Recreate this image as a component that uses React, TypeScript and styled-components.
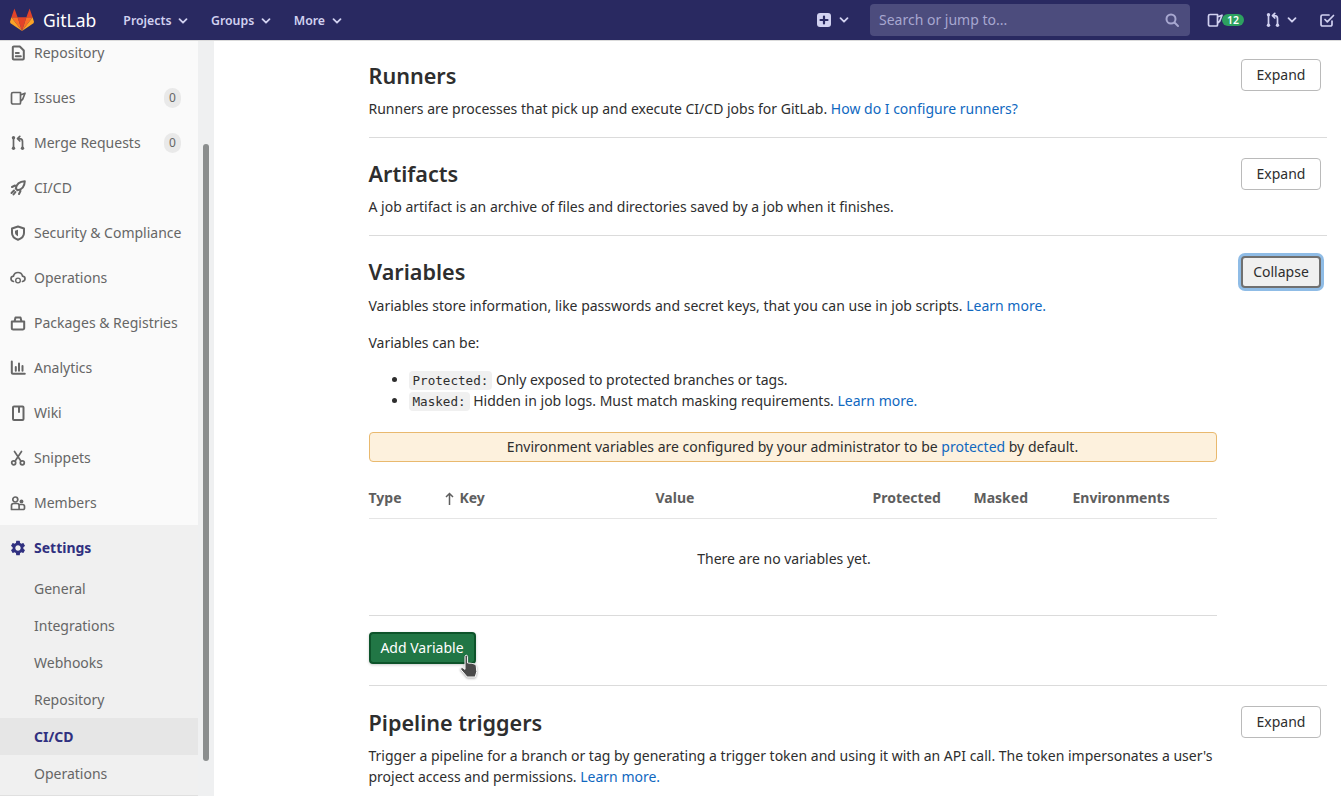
import React from 'react';
import styled, { createGlobalStyle } from 'styled-components';
import { MdSettings } from 'react-icons/md';

const GlobalStyle = createGlobalStyle`
	html, body {
		margin: 0;
		height: 100%;
		overflow: hidden;
	}
	body {
		font-family: 'Noto Sans', 'Liberation Sans', sans-serif;
		font-size: 14px;
		line-height: 20px;
		color: #2e2e2e;
		background: #fff;
	}
`;

const Page = styled.div`
	display: flex;
	flex-direction: column;
	height: 796px;
	overflow: hidden;
`;

const Navbar = styled.header`
	display: flex;
	align-items: center;
	flex: none;
	height: 40px;
	padding-left: 10px;
	background: #292961;
	border-bottom: 1px solid #dbdbdb;
	color: #d1d1f0;
`;

const Brand = styled.div`
	display: flex;
	align-items: center;
	gap: 9px;
	margin-right: 27px;
	color: #fff;
	font-size: 17.5px;
	font-weight: 400;
`;

const NavLink = styled.div`
	display: flex;
	align-items: center;
	gap: 7px;
	margin-right: 22.5px;
	padding-top: 1px;
	font-size: 12.3px;
	font-weight: 600;
`;

const NavRight = styled.div`
	display: flex;
	align-items: center;
	margin-left: auto;
`;

const IconGroup = styled.div<{ $gap?: number; $mr?: number }>`
	display: flex;
	align-items: center;
	gap: ${(p) => p.$gap ?? 7}px;
	margin-right: ${(p) => p.$mr ?? 0}px;
`;

const Search = styled.div`
	display: flex;
	align-items: center;
	justify-content: space-between;
	box-sizing: border-box;
	width: 320px;
	height: 32px;
	margin-right: 17px;
	padding: 0 10px 0 9px;
	border-radius: 4px;
	background: #4c4c7d;
	color: #a7a7d0;
	font-size: 14px;
`;

const NavBadge = styled.span`
	display: inline-block;
	margin-left: -1px;
	width: 22px;
	height: 12px;
	border-radius: 6px;
	background: #2da160;
	color: #fff;
	font-size: 10.5px;
	font-weight: 600;
	line-height: 12px;
	text-align: center;
`;

const Body = styled.div`
	display: flex;
	flex: 1;
	min-height: 0;
`;

const Sidebar = styled.aside`
	display: flex;
	flex: none;
	width: 214px;
	background: #eff0f1;
	overflow: hidden;
`;

const NavList = styled.nav`
	flex: none;
	width: 198px;
	margin-top: -11px;
	background: #fafafa;
`;

const NavItem = styled.div<{ $active?: boolean }>`
	display: flex;
	align-items: center;
	gap: 8px;
	box-sizing: border-box;
	height: 45px;
	padding: 0 17px 0 10px;
	color: ${(p) => (p.$active ? '#303080' : '#666')};
	font-weight: ${(p) => (p.$active ? 700 : 400)};
	background: ${(p) => (p.$active ? '#f0f0f0' : 'transparent')};
`;

const NavLabel = styled.span`
	flex: 1;
	white-space: nowrap;
`;

const Count = styled.span`
	width: 17px;
	height: 20px;
	border-radius: 10px;
	background: #e9e9e9;
	font-size: 12px;
	line-height: 20px;
	text-align: center;
`;

const SubList = styled.div`
	padding-bottom: 3px;
	background: #f0f0f0;
	border-bottom: 1px solid #e0e0e0;
`;

const SubItem = styled.div<{ $active?: boolean }>`
	height: 37px;
	padding-left: 34px;
	line-height: 37px;
	color: ${(p) => (p.$active ? '#303080' : '#666')};
	font-weight: ${(p) => (p.$active ? 700 : 400)};
	background: ${(p) => (p.$active ? '#e6e6e6' : 'transparent')};
`;

const ScrollTrack = styled.div`
	flex: 1;
	padding: 103px 5px 0;
`;

const ScrollThumb = styled.div`
	height: 617px;
	border-radius: 3px;
	background: #8b8e8e;
`;

const Main = styled.main`
	flex: 1;
	padding: 0 14px 0 154.5px;
	overflow: hidden;
`;

const Section = styled.section<{ $first?: boolean }>`
	padding: ${(p) => (p.$first ? '18px 0' : '20px 0 18px')};
	border-bottom: 1px solid #dbdbdb;
`;

const SectionHead = styled.div`
	display: flex;
	align-items: center;
	justify-content: space-between;
	padding-right: 6px;
	height: 32px;
`;

const Title = styled.h4<{ $low?: boolean }>`
	margin: 0;
	padding-top: ${(p) => (p.$low ? 2 : 0)}px;
	font-size: 21.6px;
	font-weight: 600;
	line-height: 32px;
`;

const Button = styled.button<{ $focus?: boolean }>`
	box-sizing: border-box;
	width: 80px;
	height: 32px;
	border: 1px solid #bababa;
	border-radius: 4px;
	background: #fff;
	color: #2e2e2e;
	font: inherit;
	${(p) =>
		p.$focus &&
		`
		border: 2px solid #707070;
		background: #f0f0f0;
		box-shadow: 0 0 0 3px #8fbce6;
	`}
`;

const Text = styled.p<{ $mt?: number }>`
	margin: ${(p) => p.$mt ?? 7}px 0 0;
	max-width: 860px;
`;

const WrappedText = styled(Text)`
	line-height: 21px;
`;

const Link = styled.a`
	color: #1068bf;
`;

const Bullets = styled.ul`
	margin: 16px 0 0;
	padding-left: 40px;
	line-height: 21px;
`;

const Code = styled.code`
	padding: 2px 4px;
	border-radius: 4px;
	background: #f0f0f0;
	font-family: 'DejaVu Sans Mono', 'Liberation Mono', monospace;
	font-size: 12.6px;
	line-height: 1;
`;

const Inner = styled.div`
	width: 848px;
`;

const Alert = styled.div`
	box-sizing: border-box;
	height: 30px;
	margin-top: 21px;
	border: 1px solid #e9b96e;
	border-radius: 4px;
	background: #fdf1dd;
	line-height: 28px;
	text-align: center;
`;

const TableHead = styled.div`
	display: grid;
	grid-template-columns: 76px 211px 217px 101px 99px 1fr;
	align-items: end;
	box-sizing: content-box;
	height: 46px;
	padding-bottom: 10px;
	border-bottom: 1px solid #e5e5e5;
	color: #5e5e5e;
	font-weight: 700;
`;

const SortHead = styled.span`
	display: flex;
	align-items: center;
	gap: 6px;
`;

const Empty = styled.div`
	height: 96px;
	padding-right: 17px;
	line-height: 80px;
	text-align: center;
	border-bottom: 1px solid #dbdbdb;
`;

const AddWrap = styled.div`
	position: relative;
	width: 107px;
	margin: 16px 0 3px;
`;

const AddButton = styled.button`
	display: block;
	box-sizing: border-box;
	width: 107px;
	height: 32px;
	border: 2px solid #0d532a;
	border-radius: 4px;
	background: #217645;
	color: #fff;
	font: inherit;
	padding: 0;
	box-shadow: 0 1px 3px rgba(0, 0, 0, 0.2);
`;

const Cursor = styled.svg`
	position: absolute;
	left: 90px;
	top: 22px;
	filter: drop-shadow(0 1px 1px rgba(0, 0, 0, 0.35));
`;

const Glyph = styled.svg<{ $size?: number }>`
	flex: none;
	display: block;
	width: ${(p) => p.$size ?? 16}px;
	height: ${(p) => p.$size ?? 16}px;
	fill: none;
	stroke: currentColor;
	stroke-width: 1.7;
	stroke-linecap: round;
	stroke-linejoin: round;
`;

const Filled = styled.g`
	fill: currentColor;
	stroke: none;
`;

const SettingsGlyph = styled(MdSettings)`
	flex: none;
	margin: 0 -1px;
	width: 18px;
	height: 18px;
`;

const Chevron = ({ size = 10 }: { size?: number }) => (
	<Glyph $size={size} viewBox="0 0 10 10" style={{ strokeWidth: 1.8 }}>
		<path d="M1.5 3.2 5 6.7l3.5-3.5" />
	</Glyph>
);

const Logo = () => (
	<svg width="24" height="24" viewBox="0 0 24 24" style={{ display: 'block' }}>
		<polygon points="12,23 7.6,9.2 16.4,9.2" fill="#e24329" />
		<polygon points="12,23 7.6,9.2 1.4,9.2" fill="#fc6d26" />
		<polygon points="12,23 16.4,9.2 22.6,9.2" fill="#fc6d26" />
		<polygon points="1.4,9.2 4.4,0.6 7.6,9.2" fill="#e24329" />
		<polygon points="22.6,9.2 19.6,0.6 16.4,9.2" fill="#e24329" />
		<polygon points="1.4,9.2 0,13.8 0.5,15.2 12,23" fill="#fca326" />
		<polygon points="22.6,9.2 24,13.8 23.5,15.2 12,23" fill="#fca326" />
	</svg>
);

const IssuesIcon = () => (
	<Glyph viewBox="0 0 16 16">
		<path d="M10.500 2.500H3A1.500 1.500 0 0 0 1.500 4v8.500A1.500 1.500 0 0 0 3 14h6.500a1 1 0 0 0 1-1V2.500ZM10.500 5l4.500-1.800-2.300 6-2.200 2.300" />
	</Glyph>
);

const MergeIcon = () => (
	<Glyph viewBox="0 0 16 16">
		<path d="M3.500 4v8M12.500 6.500V12M12.500 6.500c0-2-1-2.800-3-2.800H8M9.800 1.300 7.500 3.700l2.300 2.300" />
		<Filled>
			<circle cx="3.500" cy="2.800" r="1.700" />
			<circle cx="3.500" cy="13.200" r="1.700" />
			<circle cx="12.500" cy="13.200" r="1.700" />
		</Filled>
	</Glyph>
);

const TodoIcon = () => (
	<Glyph viewBox="0 0 16 16">
		<path d="M13 9v3.500a1.500 1.500 0 0 1-1.500 1.500h-8A1.500 1.500 0 0 1 2 12.500v-8A1.500 1.500 0 0 1 3.500 3H10M6 7.500l2.300 2.300L14.500 3.500" />
	</Glyph>
);

const RepoIcon = () => (
	<Glyph viewBox="0 0 16 16" style={{ strokeWidth: 2 }}>
		<path d="M2.800 2.500a1 1 0 0 1 1-1h6L13.800 5.500v8a1 1 0 0 1-1 1h-9a1 1 0 0 1-1-1v-11Z" />
		<path d="M5.800 8h3M5.800 11.300h5" />
	</Glyph>
);

const RocketIcon = () => (
	<Glyph viewBox="0 0 16 16" style={{ strokeWidth: 2 }}>
		<path d="M14.800 1.200c-4.300.2-8.300 2.500-9 7.300l1.700 1.700c4.800-.7 7.100-4.700 7.300-9ZM5 5.500 2 7M10.500 11 9 14M4 10.500 1.500 13M5.500 12 3.500 14.500" />
	</Glyph>
);

const ShieldIcon = () => (
	<Glyph viewBox="0 0 16 16" style={{ strokeWidth: 2 }}>
		<path d="M8 1.500 14 3.500v4.500c0 3.200-2.500 5.500-6 6.800-3.500-1.300-6-3.600-6-6.800V3.500L8 1.500Z" />
		<Filled>
			<path d="M8 4.800v6.400c-1.800-.8-3-1.900-3-3.700V5.800L8 4.800Z" />
		</Filled>
	</Glyph>
);

const OperationsIcon = () => (
	<Glyph viewBox="0 0 16 16">
		<path d="M3.500 11.500C1.800 11 1 10 1 8.800c0-1.400 1-2.400 2.400-2.600C4 3.800 5.800 2.500 8 2.500s4 1.300 4.600 3.700c1.400.2 2.400 1.200 2.400 2.600 0 1.200-.8 2.200-2.500 2.700" />
		<Filled>
			<circle cx="8" cy="10.500" r="3" />
		</Filled>
		<circle cx="8" cy="10.500" r=".8" stroke="#fafafa" />
	</Glyph>
);

const PackageIcon = () => (
	<Glyph viewBox="0 0 16 16" style={{ strokeWidth: 2 }}>
		<path d="M1.800 6.500h12.400V13a1.500 1.500 0 0 1-1.500 1.500H3.300A1.500 1.500 0 0 1 1.800 13V6.500ZM4.500 6.500 5.500 2.500h5l1 4" />
	</Glyph>
);

const AnalyticsIcon = () => (
	<Glyph viewBox="0 0 16 16" style={{ strokeWidth: 2 }}>
		<path d="M1.800 1.500v11.200a1 1 0 0 0 1 1h12M5.800 7v3.800M9 3.500v7.300M12.500 6v4.800" />
	</Glyph>
);

const WikiIcon = () => (
	<Glyph viewBox="0 0 16 16" style={{ strokeWidth: 2 }}>
		<path d="M4 1.500h8.500a1 1 0 0 1 1 1V14a1 1 0 0 1-1 1H4a1 1 0 0 1-1-1V2.500a1 1 0 0 1 1-1ZM9 1.500V7" />
	</Glyph>
);

const SnippetIcon = () => (
	<Glyph viewBox="0 0 16 16">
		<circle cx="3.700" cy="12.800" r="2" />
		<circle cx="12.300" cy="12.800" r="2" />
		<path d="M5 11.200 11.500 1.500M11 11.200 4.500 1.500" />
	</Glyph>
);

const MembersIcon = () => (
	<Glyph viewBox="0 0 16 16">
		<circle cx="5.300" cy="4.500" r="2.500" />
		<path d="M1.500 14.500V10.500a2 2 0 0 1 2-2h3.600a2 2 0 0 1 2 2v4ZM9 14.500h4.200a1.300 1.300 0 0 0 1.300-1.300v-1.700a2 2 0 0 0-2-2H9" />
		<Filled>
			<circle cx="11.500" cy="6.400" r="1.900" />
		</Filled>
	</Glyph>
);

const NewIcon = () => (
	<Glyph viewBox="0 0 16 16">
		<rect x="1" y="1" width="14" height="14" rx="3" fill="currentColor" stroke="none" />
		<path d="M8 4.500v7M4.500 8h7" stroke="#292961" strokeWidth="2.200" />
	</Glyph>
);

const SearchIcon = () => (
	<Glyph viewBox="0 0 16 16" style={{ strokeWidth: 2 }}>
		<circle cx="7" cy="7" r="4.500" />
		<path d="m10.500 10.500 3.500 3.500" />
	</Glyph>
);

const SortArrow = () => (
	<svg width="9" height="13" viewBox="0 0 9 13" fill="none" stroke="#5e5e5e" strokeWidth="1.500" style={{ display: 'block' }}>
		<path d="M4.500 13V1.500M1 5l3.500-3.500L8 5" />
	</svg>
);

const HandCursor = () => (
	<Cursor width="20" height="25" viewBox="0 0 20 25">
		<path
			d="M6 2.500c0-1.700 2.600-1.700 2.600 0v6.500c3 .2 8 .4 8.600 2.700l.6 6-1.600 5.300H8.200L2 15.800c-1-1.500.7-2.900 2-1.900l2 1.500V2.500Z"
			fill="#4a4a4a"
			stroke="#fff"
			strokeWidth="1"
		/>
	</Cursor>
);

const items = [
	{ label: 'Repository', icon: <RepoIcon /> },
	{ label: 'Issues', icon: <IssuesIcon />, count: 0 },
	{ label: 'Merge Requests', icon: <MergeIcon />, count: 0 },
	{ label: 'CI/CD', icon: <RocketIcon /> },
	{ label: 'Security & Compliance', icon: <ShieldIcon /> },
	{ label: 'Operations', icon: <OperationsIcon /> },
	{ label: 'Packages & Registries', icon: <PackageIcon /> },
	{ label: 'Analytics', icon: <AnalyticsIcon /> },
	{ label: 'Wiki', icon: <WikiIcon /> },
	{ label: 'Snippets', icon: <SnippetIcon /> },
	{ label: 'Members', icon: <MembersIcon /> },
];

const subItems = ['General', 'Integrations', 'Webhooks', 'Repository', 'CI/CD', 'Operations'];

function App() {
	return (
		<Page>
			<GlobalStyle />
			<Navbar>
				<Brand>
					<Logo />
					GitLab
				</Brand>
				<NavLink>
					Projects <Chevron />
				</NavLink>
				<NavLink>
					Groups <Chevron />
				</NavLink>
				<NavLink>
					More <Chevron />
				</NavLink>
				<NavRight>
					<IconGroup $mr={21}>
						<NewIcon />
						<Chevron />
					</IconGroup>
					<Search>
						Search or jump to...
						<SearchIcon />
					</Search>
					<IconGroup $gap={0} $mr={21}>
						<IssuesIcon />
						<NavBadge>12</NavBadge>
					</IconGroup>
					<IconGroup $gap={6} $mr={22}>
						<MergeIcon />
						<Chevron />
					</IconGroup>
					<IconGroup $mr={6}>
						<TodoIcon />
					</IconGroup>
				</NavRight>
			</Navbar>
			<Body>
				<Sidebar>
					<NavList>
						{items.map((item) => (
							<NavItem key={item.label}>
								{item.icon}
								<NavLabel>{item.label}</NavLabel>
								{item.count !== undefined && <Count>{item.count}</Count>}
							</NavItem>
						))}
						<NavItem $active>
							<SettingsGlyph />
							<NavLabel>Settings</NavLabel>
						</NavItem>
						<SubList>
							{subItems.map((label) => (
								<SubItem key={label} $active={label === 'CI/CD'}>
									{label}
								</SubItem>
							))}
						</SubList>
					</NavList>
					<ScrollTrack>
						<ScrollThumb />
					</ScrollTrack>
				</Sidebar>
				<Main>
					<Section $first>
						<SectionHead>
							<Title $low>Runners</Title>
							<Button>Expand</Button>
						</SectionHead>
						<Text $mt={8}>
							Runners are processes that pick up and execute CI/CD jobs for GitLab.{' '}
							<Link>How do I configure runners?</Link>
						</Text>
					</Section>
					<Section>
						<SectionHead>
							<Title>Artifacts</Title>
							<Button>Expand</Button>
						</SectionHead>
						<Text>A job artifact is an archive of files and directories saved by a job when it finishes.</Text>
					</Section>
					<Section>
						<SectionHead>
							<Title>Variables</Title>
							<Button $focus>Collapse</Button>
						</SectionHead>
						<Text $mt={8}>
							Variables store information, like passwords and secret keys, that you can use in job scripts.{' '}
							<Link>Learn more.</Link>
						</Text>
						<Text $mt={17}>Variables can be:</Text>
						<Bullets>
							<li>
								<Code>Protected:</Code> Only exposed to protected branches or tags.
							</li>
							<li>
								<Code>Masked:</Code> Hidden in job logs. Must match masking requirements. <Link>Learn more.</Link>
							</li>
						</Bullets>
						<Inner>
							<Alert>
								Environment variables are configured by your administrator to be <Link>protected</Link> by default.
							</Alert>
							<TableHead>
								<span>Type</span>
								<SortHead>
									<SortArrow />
									Key
								</SortHead>
								<span>Value</span>
								<span>Protected</span>
								<span>Masked</span>
								<span>Environments</span>
							</TableHead>
							<Empty>There are no variables yet.</Empty>
							<AddWrap>
								<AddButton>Add Variable</AddButton>
								<HandCursor />
							</AddWrap>
						</Inner>
					</Section>
					<Section>
						<SectionHead>
							<Title $low>Pipeline triggers</Title>
							<Button>Expand</Button>
						</SectionHead>
						<WrappedText $mt={7}>
							Trigger a pipeline for a branch or tag by generating a trigger token and using it with an API call. The
							token impersonates a user's project access and permissions. <Link>Learn more.</Link>
						</WrappedText>
					</Section>
				</Main>
			</Body>
		</Page>
	);
}

export default App;
